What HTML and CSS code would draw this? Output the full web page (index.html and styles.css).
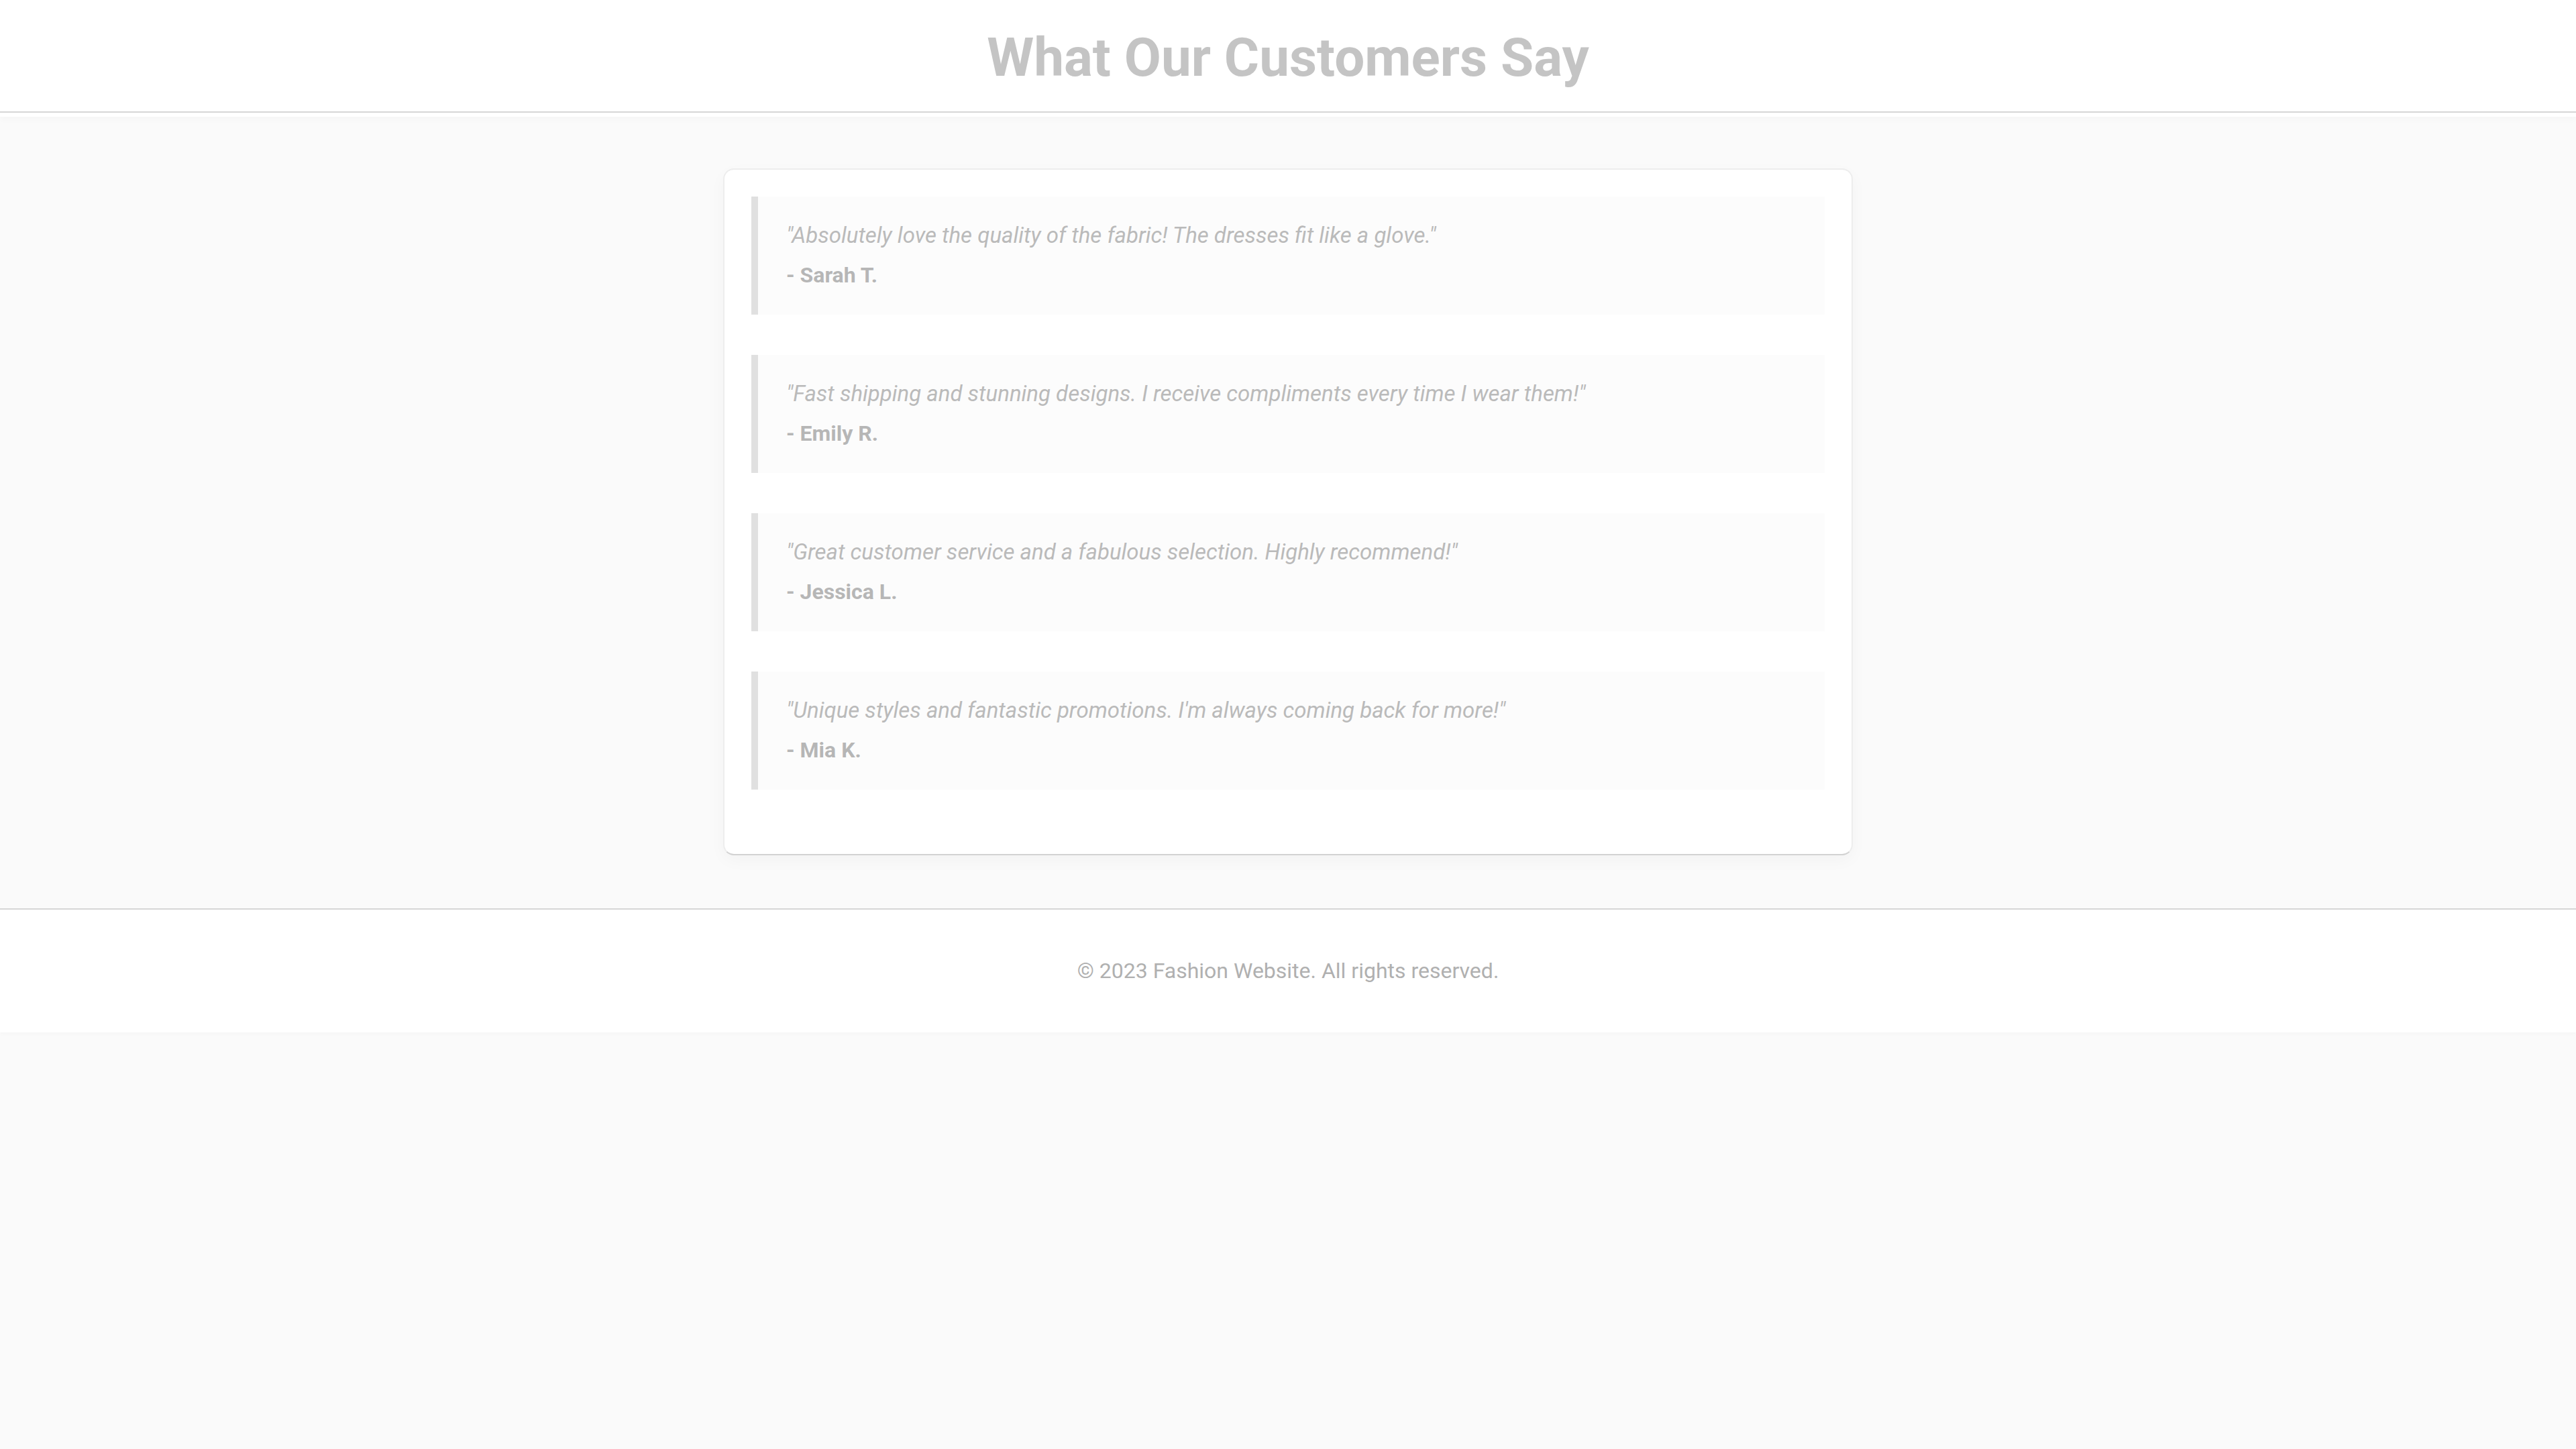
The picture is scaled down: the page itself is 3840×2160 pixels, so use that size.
FILE: index.html
```html
<!DOCTYPE html>
<html lang="en">
<head>
<meta charset="utf-8">
<title>What Our Customers Say</title>
<link rel="stylesheet" href="styles.css">
</head>
<body>
<header class="site-header">
  <h1 class="site-title">What Our Customers Say</h1>
</header>
<main class="main">
  <section class="card">
    <blockquote class="testimonial">
      <p class="quote">"Absolutely love the quality of the fabric! The dresses fit like a glove."</p>
      <p class="author">- Sarah T.</p>
    </blockquote>
    <blockquote class="testimonial">
      <p class="quote">"Fast shipping and stunning designs. I receive compliments every time I wear them!"</p>
      <p class="author">- Emily R.</p>
    </blockquote>
    <blockquote class="testimonial">
      <p class="quote">"Great customer service and a fabulous selection. Highly recommend!"</p>
      <p class="author">- Jessica L.</p>
    </blockquote>
    <blockquote class="testimonial">
      <p class="quote">"Unique styles and fantastic promotions. I'm always coming back for more!"</p>
      <p class="author">- Mia K.</p>
    </blockquote>
  </section>
</main>
<footer class="site-footer">
  <p class="copyright">© 2023 Fashion Website. All rights reserved.</p>
</footer>
</body>
</html>
```

FILE: styles.css
```css
html, body {
  margin: 0;
  padding: 0;
}
body {
  background: #fafafa;
  font-family: Roboto, "Liberation Sans", Arial, sans-serif;
  min-height: 2160px;
}
.site-header {
  background: #ffffff;
  padding: 38px 0 40px;
  text-align: center;
  box-shadow: inset 0 -6px 0 #ffffff, inset 0 -8px 0 #d6d6d6, 0 4px 10px rgba(0, 0, 0, 0.025);
  position: relative;
  z-index: 1;
}
.site-title {
  margin: 0;
  font-size: 80px;
  line-height: 1.2;
  font-weight: 700;
  color: #c4c4c4;
}
.main {
  padding: 77px 0 79px;
}
.card {
  box-sizing: border-box;
  width: 1684px;
  margin: 0 auto;
  background: #ffffff;
  border: 2px solid #ededed;
  border-bottom-color: #d2d2d2;
  border-radius: 16px;
  padding: 40px 40px 36px;
  box-shadow: 0 8px 24px rgba(0, 0, 0, 0.03);
}
.testimonial {
  margin: 0 0 60px;
  background: #fcfcfc;
  border-left: 10px solid #e0e0e0;
  padding: 38px 40px 40px 42px;
}
.quote {
  margin: 0 0 20px;
  font-size: 33px;
  line-height: 1.2;
  font-style: italic;
  color: #bababa;
}
.author {
  margin: 0;
  font-size: 32px;
  line-height: 1.2;
  font-weight: 700;
  color: #b6b6b6;
}
.site-footer {
  background: #ffffff;
  border-top: 2px solid #d6d6d6;
  padding: 66px 0 66px;
  text-align: center;
  box-shadow: 0 3px 6px rgba(0, 0, 0, 0.02);
}
.copyright {
  margin: 0;
  font-size: 32px;
  line-height: 1.6;
  color: #b0b0b0;
}
```
